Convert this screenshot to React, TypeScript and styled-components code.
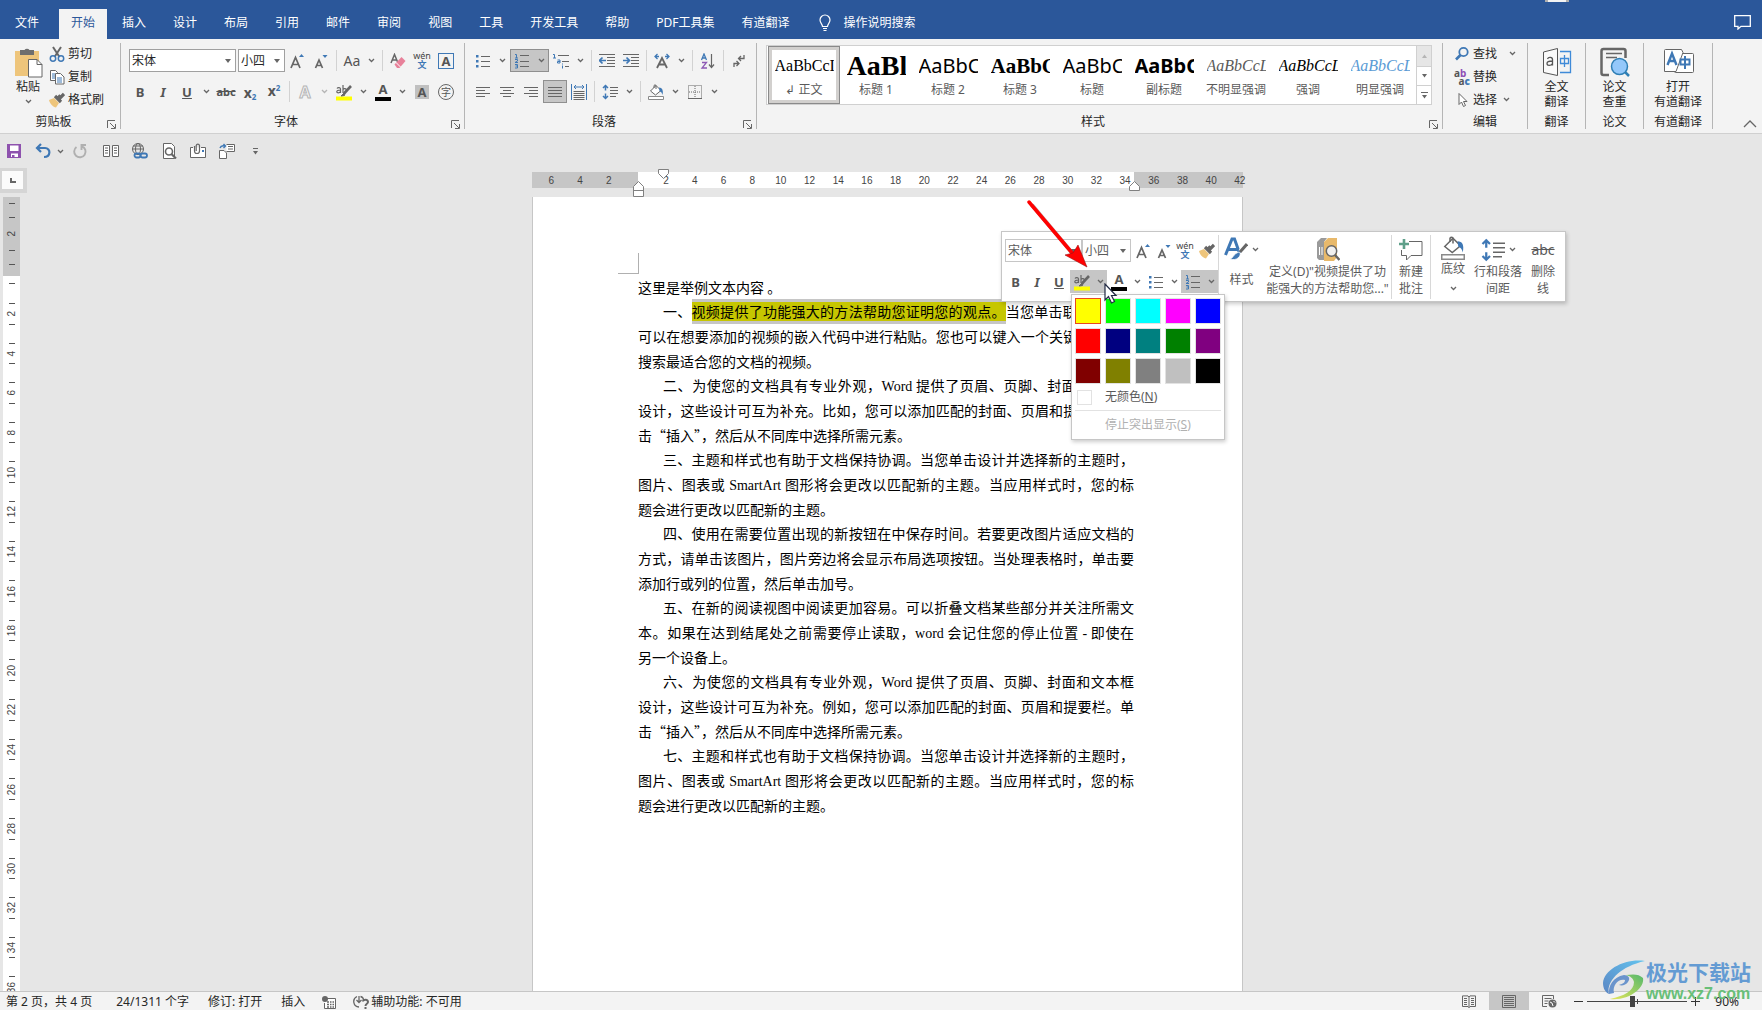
import React from "react";
import styled, { createGlobalStyle, css } from "styled-components";

const blue = "#3f78b5";
const ink = "#666666";
const uiFont = '"Noto Sans", "Noto Sans CJK SC", sans-serif';

const GlobalStyle = createGlobalStyle`
  *, *::before, *::after { box-sizing: border-box; }
  body { margin: 0; background: #e6e6e6; font-family: ${uiFont}; font-size: 12px; line-height: 16px; color: #262626; }
  button, select, input { font: inherit; color: inherit; margin: 0; }
  button { border: 0; padding: 0; background: none; white-space: nowrap; }
  svg { display: block; flex: none; }
`;

/* ---------- shell ---------- */

const Shell = styled.div`
  height: 100vh;
  display: flex;
  flex-direction: column;
  overflow: hidden;
  position: relative;
`;

const TabBar = styled.nav`
  height: 39px;
  flex: none;
  display: flex;
  align-items: flex-end;
  gap: 3px;
  padding: 0 11px 0 3px;
  background: #2b579a;
  position: relative;
`;

const Tab = styled.button<{ $active?: boolean; $lead?: boolean }>`
  height: 30px;
  padding: 0 12px 3px;
  line-height: 20px;
  color: ${(p) => (p.$active ? "#2b579a" : "#ffffff")};
  background: ${(p) => (p.$active ? "#f3f3f3" : "transparent")};
  margin-right: ${(p) => (p.$lead ? "5px" : "0")};
`;

const TellMe = styled.button`
  height: 30px;
  padding: 0 0 3px 15px;
  display: flex;
  align-items: center;
  gap: 12px;
  color: #ffffff;
`;

const CommentButton = styled.button`
  height: 30px;
  margin-left: auto;
  padding-bottom: 3px;
`;

const TopNotch = styled.span`
  position: absolute;
  top: 0;
  right: 193px;
  width: 24px;
  height: 2px;
  background: #f3f3f3;
  border: solid #b0b0b0;
  border-width: 0 3px;
`;

/* ---------- ribbon ---------- */

const Ribbon = styled.div`
  height: 95px;
  flex: none;
  display: flex;
  padding-top: 4px;
  background: #f3f3f3;
  border-bottom: 1px solid #d0d0d0;
`;

const Group = styled.section<{ $w?: number; $grow?: boolean }>`
  ${(p) => (p.$grow ? "flex: 1 1 0; min-width: 0;" : `width: ${p.$w}px; flex: none;`)}
  height: 86px;
  display: flex;
  flex-direction: column;
  border-right: 1px solid #b5b5b5;
`;

const GroupBody = styled.div<{ $left?: number; $top?: number }>`
  flex: 1;
  min-height: 0;
  display: flex;
  padding: ${(p) => p.$top ?? 0}px 0 0 ${(p) => p.$left ?? 0}px;
`;

const GroupFoot = styled.div`
  height: 14px;
  flex: none;
  display: flex;
  align-items: center;
`;

const Launcher = styled.button`
  width: 13px;
  align-self: flex-end;
`;

const FootLabel = styled.span`
  flex: 1;
  text-align: center;
  white-space: nowrap;
`;

const Rows = styled.div`
  display: flex;
  flex-direction: column;
  gap: 8px;
`;

const ToolRow = styled.div`
  height: 23px;
  display: flex;
  align-items: center;
`;

const Tool = styled.button<{ $on?: boolean; $w?: number }>`
  width: ${(p) => p.$w ?? 24}px;
  height: 23px;
  display: flex;
  align-items: center;
  justify-content: center;
  color: #555555;
  ${(p) =>
    p.$on &&
    css`
      background: #c6c6c6;
      border: 1px solid #8f8f8f;
    `}
`;

const Split = styled.button<{ $on?: boolean; $flat?: boolean; $w?: number }>`
  width: ${(p) => p.$w ?? 39}px;
  height: 23px;
  display: grid;
  grid-template-columns: 24px 1fr;
  align-items: center;
  justify-items: center;
  color: #555555;
  ${(p) =>
    p.$on &&
    css`
      background: #c6c6c6;
      box-shadow: ${p.$flat ? "none" : "inset 0 0 0 1px #8f8f8f"};
    `}
`;

const Sep = styled.span`
  width: 7px;
  height: 21px;
  flex: none;
  display: flex;
  justify-content: center;
  &::after { content: ""; width: 1px; background: #d2d2d2; }
`;

const Glyph = styled.span<{ $bold?: boolean; $italic?: boolean; $under?: boolean; $strike?: boolean; $size?: number }>`
  font-family: "Noto Sans", sans-serif;
  font-size: ${(p) => p.$size ?? 13}px;
  font-weight: ${(p) => (p.$bold ? 700 : 400)};
  font-style: ${(p) => (p.$italic ? "italic" : "normal")};
  text-decoration: ${(p) => (p.$under ? "underline" : p.$strike ? "line-through" : "none")};
  line-height: 16px;
`;

const SelectBox = styled.span<{ $w: number; $overlap?: boolean; $light?: boolean }>`
  position: relative;
  width: ${(p) => p.$w}px;
  height: 23px;
  flex: none;
  display: flex;
  border: 1px solid ${(p) => (p.$light ? "#c6c6c6" : "#a0a0a0")};
  background: #ffffff;
  margin-left: ${(p) => (p.$overlap ? "2px" : "0")};
  &::after {
    content: "";
    position: absolute;
    right: 4px;
    top: 9px;
    border: 3px solid transparent;
    border-top: 4px solid #666666;
    border-bottom: 0;
    pointer-events: none;
  }
  select {
    appearance: none;
    width: 100%;
    border: 0;
    padding: 0 12px 0 2px;
    background: transparent;
    outline: 0;
  }
`;

const PasteButton = styled.button`
  display: flex;
  flex-direction: column;
  align-items: center;
  width: 30px;
  padding-top: 4px;
`;

const PasteLabel = styled.span`
  padding: 1px 0 4px;
`;

const Stack = styled.div`
  display: flex;
  flex-direction: column;
  padding-left: 6px;
  margin-top: -1px;
`;

const StackButton = styled.button`
  height: 23px;
  display: flex;
  align-items: center;
  gap: 3px;
  text-align: left;
`;

const BigButton = styled.button`
  flex: 1;
  display: flex;
  flex-direction: column;
  align-items: center;
  line-height: 15px;
  padding-top: 3px;
`;

const BigIcon = styled.span`
  height: 31px;
  display: flex;
  align-items: center;
`;

const BigText = styled.span`
  padding-top: 2px;
  white-space: pre-line;
  text-align: center;
`;

const Collapse = styled.div`
  flex: none;
  width: 49px;
  display: flex;
  align-items: flex-end;
  justify-content: flex-end;
  padding: 0 5px 5px 0;
`;

/* ---------- style gallery ---------- */

const Gallery = styled.div`
  flex: 1;
  min-width: 0;
  height: 60px;
  display: flex;
  margin-right: 10px;
  border: 1px solid #d0d0d0;
  background: #ffffff;
`;

const GalleryItems = styled.div`
  flex: 1;
  min-width: 0;
  display: flex;
  overflow: hidden;
  padding-left: 1px;
`;

const StyleItem = styled.button<{ $on?: boolean }>`
  width: 72px;
  flex: none;
  height: 58px;
  display: flex;
  flex-direction: column;
  align-items: center;
  padding: 6px 6px 0;
  ${(p) => p.$on && "box-shadow: inset 0 0 0 1px #8a8a8a, inset 0 0 0 4px #d2d0ce;"}
`;

const Preview = styled.span<{ $serif?: boolean; $bold?: boolean; $italic?: boolean; $size: number; $color?: string }>`
  width: 59px;
  height: 29px;
  line-height: 28px;
  overflow: hidden;
  text-align: left;
  font-family: ${(p) => (p.$serif ? '"Liberation Serif", serif' : '"Noto Sans", sans-serif')};
  font-size: ${(p) => p.$size}px;
  font-weight: ${(p) => (p.$bold ? 700 : 400)};
  font-style: ${(p) => (p.$italic ? "italic" : "normal")};
  color: ${(p) => p.$color ?? "#000000"};
`;

const StyleName = styled.span`
  color: #5a5a5a;
  line-height: 18px;
`;

const GalleryScroll = styled.div`
  width: 15px;
  flex: none;
  display: grid;
  grid-template-rows: 20px 19px 19px;
  border-left: 1px solid #d0d0d0;
  button { display: flex; align-items: center; justify-content: center; }
  button + button { border-top: 1px solid #d0d0d0; }
  button:first-child { background: #e6e6e6; }
`;

/* ---------- quick access ---------- */

const QuickBar = styled.div`
  height: 34px;
  flex: none;
  display: flex;
  align-items: center;
  padding-left: 4px;
  background: #e6e6e6;
`;

const QuickButton = styled.button<{ $w?: number; $apart?: boolean }>`
  width: ${(p) => p.$w ?? 29}px;
  height: 24px;
  display: flex;
  align-items: center;
  justify-content: center;
  margin-left: ${(p) => (p.$apart ? "6px" : "0")};
`;

/* ---------- workspace ---------- */

const Workspace = styled.div`
  flex: 1;
  min-height: 0;
  display: flex;
  overflow: hidden;
`;

const SideRulerColumn = styled.div`
  width: 27px;
  flex: none;
  display: flex;
  flex-direction: column;
  gap: 4px;
`;

const TabStop = styled.button`
  height: 25px;
  background: #fbfbfb;
  border: solid #d5d5d5;
  border-width: 3px 4px 4px 2px;
  display: flex;
  align-items: center;
  justify-content: center;
`;

const SideRuler = styled.div`
  width: 17px;
  margin-left: 3px;
  flex: 1;
  overflow: hidden;
  background: #ffffff;
`;

const SideCell = styled.div`
  flex: 1;
  min-height: 0;
  display: flex;
  flex-direction: column;
  align-items: center;
  justify-content: space-between;
  padding: 9px 0;
`;

const SideMargin = styled.div`
  height: 79px;
  background: #c6c6c6;
  padding: 6px 0 11px;
  display: flex;
  flex-direction: column;
  align-items: center;
  justify-content: space-between;
`;

const SideScale = styled.div`
  height: 731px;
  padding-top: 7px;
  display: flex;
  flex-direction: column;
  align-items: center;
`;

const Tick = styled.span<{ $first?: boolean }>`
  width: 6px;
  height: 1px;
  flex: none;
  background: #555555;
  margin-bottom: ${(p) => (p.$first ? "10px" : "0")};
`;

const SideNumber = styled.span`
  writing-mode: vertical-rl;
  transform: rotate(180deg);
  font-family: "Liberation Sans", sans-serif;
  font-size: 10px;
  line-height: 12px;
  color: #444444;
`;

const Canvas = styled.main`
  flex: 1;
  min-width: 0;
  display: flex;
  flex-direction: column;
  align-items: center;
  padding: 4px 14px 0 0;
`;

const TopRuler = styled.div`
  position: relative;
  width: 711px;
  height: 16px;
  flex: none;
  margin-bottom: 9px;
  padding-left: 5px;
  display: flex;
  background: linear-gradient(to right, #c6c6c6 106px, #ffffff 106px, #ffffff 602px, #c6c6c6 602px);
`;

const TopScale = styled.div`
  flex: none;
  width: 717px;
  display: flex;
  span {
    flex: 1;
    text-align: center;
    font-family: "Liberation Sans", sans-serif;
    font-size: 10px;
    line-height: 17px;
    color: #444444;
  }
`;

const Marker = styled.svg<{ $x: number; $y: number }>`
  position: absolute;
  left: ${(p) => p.$x}px;
  top: ${(p) => p.$y}px;
`;

const Page = styled.article`
  position: relative;
  width: 711px;
  flex: 1;
  padding: 56px 108px 0 105px;
  background: #ffffff;
  border: solid #c6c6c6;
  border-width: 0 1px;
`;

const CropMark = styled.div`
  width: 21px;
  height: 21px;
  margin: 0 0 1px -20px;
  border: solid #b0b0b0;
  border-width: 0 1px 1px 0;
`;

const Para = styled.p<{ $indent?: boolean }>`
  margin: 0 0 -1px;
  font-family: "Noto Sans CJK SC", sans-serif;
  font-size: 14px;
  line-height: 25px;
  color: #000000;
  & > span:first-child { text-indent: ${(p) => (p.$indent ? "25px" : "0")}; }
`;

const Line = styled.span<{ $full?: boolean }>`
  display: block;
  height: 25px;
  text-align: justify;
  text-align-last: ${(p) => (p.$full ? "justify" : "left")};
`;

const Latin = styled.span`
  font-family: "Liberation Serif", serif;
`;

const Mark = styled.mark`
  color: inherit;
  padding: 2px 0 3px;
  background: linear-gradient(#c6c600, #c6c600) center / 100% 19px no-repeat #c6c6c6;
`;

/* ---------- floating toolbar ---------- */

const MiniBar = styled.div`
  position: absolute;
  left: 468px;
  top: 34px;
  width: 565px;
  height: 71px;
  display: flex;
  padding: 3px 0 2px 3px;
  background: #ffffff;
  border: 1px solid #c6c6c6;
  box-shadow: 1px 2px 4px rgba(0, 0, 0, 0.2);
  color: #5a5a5a;
`;

const MiniRows = styled.div`
  width: 214px;
  flex: none;
  display: flex;
  flex-direction: column;
  gap: 8px;
  padding-top: 4px;
  border-right: 1px solid #d8d8d8;
`;

const MiniRow = styled.div`
  display: flex;
  height: 23px;
  align-items: center;
`;

const MiniBig = styled.button<{ $w: number; $line?: boolean }>`
  width: ${(p) => p.$w}px;
  flex: none;
  display: flex;
  flex-direction: column;
  align-items: center;
  line-height: 17px;
  padding-top: 1px;
  border-right: ${(p) => (p.$line ? "1px solid #d8d8d8" : "0")};
`;

const MiniIcon = styled.span`
  height: 27px;
  display: flex;
  align-items: center;
  gap: 4px;
`;

const MiniText = styled.span<{ $lower?: boolean }>`
  white-space: pre;
  text-align: center;
  padding-top: ${(p) => (p.$lower ? "8px" : "0")};
`;

const ColorMenu = styled.div`
  position: absolute;
  left: 538px;
  top: 97px;
  width: 154px;
  padding: 3px 3px 0;
  background: #ffffff;
  border: 1px solid #c6c6c6;
  box-shadow: 1px 2px 4px rgba(0, 0, 0, 0.2);
  color: #5a5a5a;
`;

const Swatches = styled.div`
  display: grid;
  grid-template-columns: repeat(5, 26px);
  gap: 4px;
`;

const Swatch = styled.button<{ $c: string; $on?: boolean }>`
  height: 26px;
  background: ${(p) => p.$c};
  border: 1px solid ${(p) => (p.$on ? "#e8491d" : "#e2e2e2")};
`;

const MenuItem = styled.button<{ $off?: boolean }>`
  width: 100%;
  height: ${(p) => (p.$off ? 29 : 26)}px;
  display: grid;
  grid-template-columns: 15px auto;
  gap: 13px;
  padding-left: 2px;
  align-items: center;
  text-align: left;
  color: ${(p) => (p.$off ? "#b1b1b1" : "#5a5a5a")};
  border-top: ${(p) => (p.$off ? "1px solid #e2e2e2" : "0")};
`;

const NoColor = styled.span<{ $hidden?: boolean }>`
  height: 15px;
  border: ${(p) => (p.$hidden ? "0" : "1px solid #e2e2e2")};
`;

const Floating = styled.svg<{ $x: number; $y: number }>`
  position: absolute;
  left: ${(p) => p.$x}px;
  top: ${(p) => p.$y}px;
  pointer-events: none;
`;

/* ---------- status bar ---------- */

const StatusBar = styled.footer`
  height: 19px;
  flex: none;
  display: flex;
  align-items: center;
  padding-left: 6px;
  background: #f3f3f3;
  border-top: 1px solid #c6c6c6;
  line-height: 18px;
`;

const StatusItem = styled.button<{ $gap?: number }>`
  height: 18px;
  display: flex;
  align-items: center;
  gap: 1px;
  padding-top: 2px;
  margin-right: ${(p) => p.$gap ?? 19}px;
`;

const ViewButton = styled.button<{ $on?: boolean }>`
  width: 40px;
  height: 18px;
  display: flex;
  align-items: center;
  justify-content: center;
  background: ${(p) => (p.$on ? "#c6c6c6" : "transparent")};
`;

const StatusRight = styled.div`
  margin-left: auto;
  display: flex;
  align-items: center;
  height: 18px;
  padding-right: 23px;
`;

const ZoomButton = styled.button<{ $w: number }>`
  width: ${(p) => p.$w}px;
  height: 18px;
  display: flex;
  align-items: center;
  justify-content: center;
`;

const ZoomRange = styled.input`
  appearance: none;
  width: 100px;
  height: 12px;
  background: linear-gradient(#444444, #444444) center / 100% 1px no-repeat,
    linear-gradient(#444444, #444444) center / 1px 5px no-repeat;
  &::-webkit-slider-thumb { appearance: none; width: 5px; height: 11px; background: #444444; }
`;

const ZoomValue = styled.button`
  margin-left: 12px;
  padding-top: 2px;
`;

const Watermark = styled.div`
  position: absolute;
  right: 10px;
  bottom: 7px;
  display: flex;
  gap: 1px;
  align-items: center;
  pointer-events: none;
`;

const WatermarkText = styled.div`
  display: flex;
  flex-direction: column;
  width: 106px;
`;

const WatermarkName = styled.span`
  font-family: "Noto Sans CJK SC", sans-serif;
  font-weight: 700;
  font-size: 21px;
  line-height: 28px;
  color: #649bd3;
  white-space: nowrap;
`;

const WatermarkSite = styled.span`
  font-family: "Liberation Sans", sans-serif;
  font-weight: 700;
  font-size: 16px;
  line-height: 18px;
  color: #68bf78;
  white-space: nowrap;
`;

/* ---------- icons ---------- */

type IconProps = { w?: number; h?: number; vb?: string; children: React.ReactNode };
const Icon = ({ w = 16, h = 16, vb, children }: IconProps) => (
  <svg width={w} height={h} viewBox={vb ?? `0 0 ${w} ${h}`} fill="none" stroke={ink} strokeWidth="1" aria-hidden="true">
    {children}
  </svg>
);

const Caret = ({ c = "#666666" }: { c?: string }) => (
  <Icon w={7} h={5}><path d="M1 1l2.5 2.5L6 1" stroke={c} strokeWidth="1.3" /></Icon>
);
const Triangle = ({ c = "#666666" }: { c?: string }) => (
  <Icon w={7} h={4}><path d="M1 0h5L3.500 3.500z" fill={c} stroke="none" /></Icon>
);
const LaunchIcon = () => (
  <Icon w={9} h={9}><path d="M.5 8V.5H8M3 3l5 5M8.500 4v4.500H4" /></Icon>
);
const PasteIcon = () => (
  <Icon w={30} h={31}>
    <path d="M2 4h24v25H2z" fill="#eec57b" stroke="none" />
    <path d="M7 3h4.500a3 3 0 0 1 5 0H21v5H7z" fill="#6e6e6e" stroke="none" />
    <path d="M15.500 12.500h8.500l5 5v12.500H15.500z" fill="#fff" />
    <path d="M24 12.500v5h5" />
  </Icon>
);
const CutIcon = () => (
  <Icon>
    <path d="M4 1l6.500 10M12 1L5.500 11" strokeWidth="2" />
    <circle cx="4" cy="12.500" r="2.700" stroke={blue} strokeWidth="1.500" />
    <circle cx="12" cy="12.500" r="2.700" stroke={blue} strokeWidth="1.500" />
  </Icon>
);
const CopyIcon = () => (
  <Icon>
    <path d="M1.500 1.500h5l2 2v8h-7z" fill="#fff" /><path d="M3 5h3M3 7h3M3 9h3" stroke={blue} />
    <path d="M6.500 4.500h5l3.500 3.500v7H6.500z" fill="#fff" /><path d="M8 9h5M8 11h5M8 13h5" stroke={blue} />
  </Icon>
);
const BrushIcon = () => (
  <Icon>
    <path d="M0 8l5-2 5 5-3 4.500c-3-.5-6-3.500-7-7.500z" fill="#eec57b" stroke="none" />
    <path d="M6 4l6 6M9.500 5.500l2-2M10.500 6.500L15 2" strokeWidth="3.200" />
  </Icon>
);
const GrowIcon = ({ up }: { up?: boolean }) => (
  <Icon w={16} h={18}>
    <path d={up ? "M2 16L6.500 5.500 11 16M3.800 12.500h5.400" : "M2.500 16L6 8l3.500 8M3.800 13.500h4.400"} strokeWidth="1.700" />
    <path d={up ? "M10 5L12.500 2 15 5z" : "M9.500 3h5L12 6z"} fill={blue} stroke="none" />
  </Icon>
);
const EraserIcon = () => (
  <Icon>
    <path d="M1 10L4.500 1.500 8 10M2.300 7h4.400" strokeWidth="1.500" />
    <path d="M4.500 11.500L11.500 4l4 4L9.500 15H7z" fill="#e8819a" stroke="none" />
    <path d="M6 9.500l4.500 4.500" stroke="#fff" />
  </Icon>
);
const PinyinBox = styled.span`
  display: flex;
  flex-direction: column;
  align-items: center;
  font-size: 9px;
  line-height: 8px;
  color: #444444;
  b { font-size: 9px; line-height: 9px; color: ${blue}; font-weight: 700; }
`;
const Pinyin = () => <PinyinBox>wén<b>文</b></PinyinBox>;

const FramedA = styled.span<{ $kind: "frame" | "shade" | "ring" | "bar" | "ghost" }>`
  display: flex;
  align-items: center;
  justify-content: center;
  width: 16px;
  height: 16px;
  font-weight: 700;
  font-size: 13px;
  line-height: 14px;
  color: #555555;
  ${(p) => p.$kind === "frame" && `border: 1px solid ${blue};`}
  ${(p) => p.$kind === "shade" && "width: 14px; height: 14px; background: #c0c0c0;"}
  ${(p) => p.$kind === "ring" && "border: 1px solid #666666; border-radius: 8px; font-size: 10px; font-weight: 400;"}
  ${(p) => p.$kind === "bar" && "border-bottom: 4px solid #000000; height: 18px; line-height: 13px;"}
  ${(p) => p.$kind === "ghost" && "font-size: 16px; color: #f3f3f3; -webkit-text-stroke: 1px #b5b5b5;"}
`;

const ScriptX = styled.span<{ $low?: boolean }>`
  display: flex;
  align-items: ${(p) => (p.$low ? "flex-end" : "flex-start")};
  height: 18px;
  font-weight: 700;
  font-size: 14px;
  line-height: 16px;
  small { font-size: 8px; line-height: 9px; color: ${blue}; }
`;

const Marker16 = () => (
  <Icon w={16} h={18}>
    <path d="M0 13.500h16v4H0z" fill="#ffff00" stroke="none" />
    <path d="M1 5.500c1-1.500 3.500-1 3.500.5v4M4.500 7C2 7 .8 7.800.8 8.700c0 1.500 2.700 1.500 3.700-.2M7 2v8M7 6.500c1-1.500 3.500-1 3.500 1" strokeWidth="1.200" />
    <path d="M15 3L8 10.500" strokeWidth="2.600" />
    <path d="M9 9l-4 4 3.500-.5z" fill={ink} />
  </Icon>
);
const BulletIcon = () => (
  <Icon>
    <path d="M6 3.500h9M6 8.500h9M6 13.500h9" />
    <path d="M1 2h2.500v2.500H1zM1 7h2.500v2.500H1zM1 12h2.500v2.500H1z" fill={blue} stroke="none" />
  </Icon>
);
const NumberIcon = () => (
  <Icon>
    <path d="M6 2.500h9M6 8.500h9M6 13.500h9" />
    <path d="M1 1.500h1.500V5M1 5h3M1 6.500h2.500V8L1 9.500h3M1 11.500h2.500v3.500H1M1.500 13h2" stroke={blue} />
  </Icon>
);
const MultiIcon = () => (
  <Icon>
    <path d="M5 2.500h11M9 8.500h7M12 13.500h4" />
    <path d="M0 1.500h1.500V5M0 5h3M4.500 7H7v3H4.500V8.500H7M9.500 10.500v1M9.500 12.500v3" stroke={blue} />
  </Icon>
);
const IndentIcon = ({ right }: { right?: boolean }) => (
  <Icon>
    <path d="M0 1.500h16M8 4.500h8M8 7.500h8M8 10.500h8M0 13.500h16" />
    <path d={right ? "M0 7.500h6M3.500 4.500l3 3-3 3" : "M1 7.500h6M3.500 4.500l-3 3 3 3"} stroke={blue} strokeWidth="1.700" />
  </Icon>
);
const TextScaleIcon = () => (
  <Icon>
    <path d="M3 15l5-10 5 10M5 11.500h6" strokeWidth="1.800" />
    <path d="M5 3.500H1M3.500 1L1 3.500 3.500 6M11 3.500h4M12.500 1L15 3.500 12.500 6" stroke={blue} strokeWidth="1.300" />
  </Icon>
);
const SortIcon = () => (
  <Icon>
    <path d="M1.500 7L4 1l2.500 6M2.300 5h3.400" stroke={blue} strokeWidth="1.300" />
    <path d="M2 9.500h4.500L2 15h5" stroke="#8e5ab5" strokeWidth="1.300" />
    <path d="M11.500 1v13M9 11.500l2.500 3 2.500-3" strokeWidth="1.200" />
  </Icon>
);
const MarksIcon = () => (
  <Icon>
    <path d="M13 2v3.500H8M10 3L7.500 5.500 10 8M8 10.500H3V14M5.500 8L8 10.500 5.500 13" strokeWidth="1.300" />
  </Icon>
);
const AlignIcon = ({ kind }: { kind: "l" | "c" | "r" | "j" }) => {
  const d = {
    l: "M1 3.500h14M1 6.500h9M1 9.500h14M1 12.500h9",
    c: "M1 3.500h14M4 6.500h8M1 9.500h14M4 12.500h8",
    r: "M1 3.500h14M6 6.500h9M1 9.500h14M6 12.500h9",
    j: "M1 3.500h14M1 6.500h14M1 9.500h14M1 12.500h14",
  }[kind];
  return <Icon><path d={d} /></Icon>;
};
const DistributeIcon = () => (
  <Icon>
    <path d="M.5 0v16M15.500 0v16M3 3h10M5 1L3 3l2 2M11 1l2 2-2 2" stroke={blue} />
    <path d="M2.500 7.500h11M2.500 9.500h11M2.500 11.500h11M2.500 13.500h11M2.500 15.500h11" />
  </Icon>
);
const SpacingIcon = ({ w = 16, h = 16 }: { w?: number; h?: number }) => (
  <Icon w={w} h={h} vb="0 0 16 16">
    <path d="M3.500 1v5.500M3.500 9.500V15M1 4l2.500-2.500L6 4M1 12l2.500 2.500L6 12" stroke={blue} strokeWidth="1.500" />
    <path d="M8 3.500h8M8 6.500h8M8 9.500h8M8 12.500h6" />
  </Icon>
);
const BucketIcon = ({ w = 16, h = 16 }: { w?: number; h?: number }) => (
  <Icon w={w} h={h} vb="0 0 16 16">
    <path d="M2.500 7L8 1.500 13 6.500 7.500 11z" fill="#fff" />
    <path d="M6 4V1.500Q7 0 8 1.500V5" />
    <path d="M11 3.500q5 0 3.500 7.500Q14 8 11.500 7z" fill={blue} stroke="none" />
    <path d="M.5 12.500h15v3H.5z" fill="#fff" stroke="#8a8a8a" />
  </Icon>
);
const BorderIcon = () => (
  <Icon>
    <path d="M1.500 1.500h13v13h-13zM8 2v12M2 8h12" strokeDasharray="1 1" />
    <path d="M1 14.500h14" />
  </Icon>
);
const FindIcon = () => (
  <Icon>
    <circle cx="9.500" cy="6" r="4.200" stroke={blue} strokeWidth="1.800" />
    <path d="M6.500 9L2 13.500" stroke={blue} strokeWidth="2.600" />
  </Icon>
);
const ReplaceBox = styled.span`
  width: 16px;
  height: 16px;
  font-weight: 700;
  font-size: 10px;
  line-height: 8px;
  color: #555555;
  i { font-style: normal; color: #8e4fb5; }
  b { color: ${blue}; }
  span { display: block; text-align: right; }
`;
const ReplaceIcon = () => <ReplaceBox>a<i>b</i><span>a<b>c</b></span></ReplaceBox>;
const PointerIcon = () => (
  <Icon><path d="M5 1.500v11l2.500-2.500 2 4.500 2-1-2-4H13z" fill="#fff" /></Icon>
);
const TranslateIcon = () => (
  <Icon w={30} h={28}>
    <path d="M1.500 4L15.500.5v27L1.500 24.500z" fill="#fafafa" stroke="#555" />
    <path d="M5.500 11c1-2.500 5-2 5 .5v6M10.500 13c-4 0-5.500 1-5.500 2.500 0 2.500 4 2.500 5.500 0" stroke="#555" strokeWidth="1.300" />
    <path d="M18 3.500h10.500v21H18M18.500 10.500h8v5h-8zM22.500 7v12" stroke="#3f8ad8" strokeWidth="1.300" />
  </Icon>
);
const CheckPaperIcon = () => (
  <Icon w={30} h={30}>
    <path d="M9 28H3.500q-2 0-2-2V4q0-2 2-2h20q2 0 2 2v7" strokeWidth="2.500" />
    <path d="M6 6.500h16M6 10.500h11" strokeWidth="1.600" />
    <circle cx="19.500" cy="19.500" r="8" fill="#94c8fa" stroke="#2f7fb5" strokeWidth="1.500" />
    <path d="M25 25l4 4" stroke="#2f7fb5" strokeWidth="2.500" />
  </Icon>
);
const YoudaoIcon = () => (
  <Icon w={31} h={28}>
    <rect x="11.500" y="5.500" width="19" height="19" rx="1" fill="#fff" />
    <path d="M1.500 2.500q0-1 1-1h16l1.500 3-7 19H1.500z" fill="#fff" />
    <path d="M4.500 17L9 5.500 13.500 17M6 13h6" stroke={blue} strokeWidth="2.400" />
    <path d="M17.500 11.500h9v5h-9zM22 8v13" stroke={blue} strokeWidth="2" />
  </Icon>
);
const BulbIcon = () => (
  <Icon w={12} h={17}>
    <path d="M3.500 12.500c0-2.500-2.500-3.500-2.500-6.500a5 5 0 0 1 10 0c0 3-2.500 4-2.500 6.500zM4 14.500h4M4.500 16.500h3" stroke="#fff" strokeWidth="1.200" />
  </Icon>
);
const CommentIcon = () => (
  <Icon w={17} h={15}><path d="M.7.7h15.600v10.600H7L4 14v-2.700H.7z" stroke="#fff" strokeWidth="1.300" /></Icon>
);
const SaveIcon = () => (
  <Icon w={14} h={14}>
    <path d="M0 0h14v14H0z" fill="#8e52ae" stroke="none" />
    <path d="M3 1.500h8.500V7H3zM4 9.500h7V13H4z" fill="#fff" stroke="none" />
    <path d="M5 11h2.500v2H5z" fill="#8e52ae" stroke="none" />
  </Icon>
);
const UndoIcon = () => (
  <Icon><path d="M6 1L2 5l4 4M2.500 5H10c6 0 6 9-1 9" stroke={blue} strokeWidth="2.200" /></Icon>
);
const RedoIcon = () => (
  <Icon><path d="M10 3.300A5.700 5.700 0 1 1 4.500 4M9.500 7V2H14" stroke="#b0b0b0" strokeWidth="1.900" /></Icon>
);
const PagesIcon = () => (
  <Icon>
    <path d="M.5 2.500h6v11h-6zM9.500 2.500h6v11h-6z" fill="#fff" />
    <path d="M2 5h3M2 7.500h3M2 10h3M11 5h3M11 7.500h3M11 10h3" />
  </Icon>
);
const GlobeLinkIcon = () => (
  <Icon>
    <circle cx="6" cy="6" r="5.500" /><ellipse cx="6" cy="6" rx="2.500" ry="5.500" /><path d="M.5 6h11M1 3h10" />
    <rect x="2.500" y="10.500" width="6" height="4" rx="2" stroke={blue} strokeWidth="1.800" />
    <rect x="8.500" y="10.500" width="6.500" height="4" rx="2" stroke={blue} strokeWidth="1.800" />
  </Icon>
);
const PreviewIcon = () => (
  <Icon>
    <path d="M2.500.5h8l3 3v12h-11z" fill="#fff" />
    <circle cx="8" cy="8.500" r="3.500" fill="#fff" strokeWidth="1.600" /><path d="M10.500 11l4.500 4.500" strokeWidth="2.200" />
  </Icon>
);
const AttachIcon = () => (
  <Icon>
    <path d="M3 4.500H.5v10h15v-10H11" fill="#fff" />
    <path d="M4.500 3v5a2.300 2.300 0 0 0 5 0V2.500a1.700 1.700 0 0 0-3.300 0V8" strokeWidth="1.200" />
    <path d="M12 7h2v2h-2z" fill={blue} stroke="none" />
  </Icon>
);
const SwitchIcon = () => (
  <Icon>
    <path d="M7.500 1.500h8v7h-8M9 3.500h5M9 6h5" fill="#fff" />
    <path d="M.5 7.500H5L7.500 10v5.500h-7z" fill="#fff" />
    <path d="M1 5q1-3 5-2M4.500 1L6.500 3l-2 2" stroke={blue} strokeWidth="1.400" />
  </Icon>
);
const StylesIcon = () => (
  <Icon w={24} h={25}>
    <path d="M1.500 18L8 2h2.500l5 14M4.500 12.500h9" stroke={blue} strokeWidth="3" />
    <path d="M23 7l-6 8" stroke="#fff" strokeWidth="6" />
    <path d="M23 7l-7 8" strokeWidth="3" />
    <path d="M15 15c2 1 1.500 4-1 6-2 1.800-5 2-8 1 3-.5 3-5 9-7z" fill={blue} stroke="#fff" strokeWidth=".8" />
  </Icon>
);
const BookIcon = () => (
  <Icon w={24} h={25}>
    <path d="M1 5l4-4h6L8 5v18H3l-2-2z" fill="#9a9a9a" stroke="none" />
    <path d="M3.500 10v8M6 10v8" stroke="#fff" />
    <path d="M8 5l4-4h9v19l-3 4H8z" fill="#e8b96b" stroke="none" />
    <circle cx="15.500" cy="14" r="5.200" fill="#f0f0f0" strokeWidth="1.500" />
    <path d="M19 18l4.500 5" strokeWidth="2.500" />
  </Icon>
);
const NewCommentIcon = () => (
  <Icon w={24} h={22}>
    <path d="M10 2.500h13v14H12L7.500 21v-4.500H2.500V11" />
    <path d="M5 0v10M0 5h10" stroke="#5fa08a" strokeWidth="2.600" />
  </Icon>
);
const CalendarIcon = () => (
  <Icon w={14} h={13}>
    <path d="M3 2.500h10.500v10h-11V7" fill="#fff" />
    <circle cx="3" cy="3" r="3" fill={ink} stroke="none" />
    <path d="M5 6h2M8 6h1.500M10.500 6H12M5 8.500h2M8 8.500h1.500M10.500 8.500H12M5 11h2M8 11h1.500M10.500 11H12" strokeWidth="1.500" />
  </Icon>
);
const AccessIcon = () => (
  <Icon w={17} h={14}>
    <path d="M4 1.500A5.500 5.500 0 0 0 6 12M6 1v6M3.500 5L6 7.500 8.500 5M7.500 1.500c2 .5 3 2 3 3.500" strokeWidth="1.300" />
    <path d="M10 6.500c0-2.500 5-2.500 5 .5 0 2-2.500 1.500-2.500 4M12.500 12v2" strokeWidth="2" />
  </Icon>
);
const ReadIcon = () => (
  <Icon w={14} h={13}>
    <path d="M7 2L6 .9H.5v10.600H6L7 12.500l1-1h5.500V.9H8zM7 2v11" />
    <path d="M2 3.500h3M2 5.500h3M2 7.500h3M2 9.500h3M9 3.500h3M9 5.500h3M9 7.500h3M9 9.500h3" />
  </Icon>
);
const PrintIcon = () => (
  <Icon w={14} h={13}><path d="M.5.5h13v12H.5zM2 2.500h10M2 4.500h10M2 6.500h10M2 8.500h10M2 10.500h10" /></Icon>
);
const WebIcon = () => (
  <Icon w={15} h={13}>
    <path d="M5 11.500H.5v-11h11V4M2.500 3.500h7M2.500 6h4M2.500 8.500h3" />
    <circle cx="10.500" cy="8.500" r="4" fill={ink} stroke="none" /><path d="M8 7l2 1 1 3M11.500 6l1.500 1.500" stroke="#fff" />
  </Icon>
);

/* ---------- data ---------- */

const tabs = ["文件", "开始", "插入", "设计", "布局", "引用", "邮件", "审阅", "视图", "工具", "开发工具", "帮助", "PDF工具集", "有道翻译"];

const gallery = [
  { name: "↲ 正文", text: "AaBbCcI", serif: true, size: 16 },
  { name: "标题 1", text: "AaBl", serif: true, bold: true, size: 28 },
  { name: "标题 2", text: "AaBbC", size: 20 },
  { name: "标题 3", text: "AaBbC", serif: true, bold: true, size: 21 },
  { name: "标题", text: "AaBbC", size: 20 },
  { name: "副标题", text: "AaBbC", size: 20, bold: true },
  { name: "不明显强调", text: "AaBbCcL", serif: true, italic: true, size: 16, color: "#5a5a5a" },
  { name: "强调", text: "AaBbCcL", serif: true, italic: true, size: 16 },
  { name: "明显强调", text: "AaBbCcL", serif: true, italic: true, size: 16, color: "#5b9bd5" },
];

const swatches = [
  ["黄色", "#ffff00"], ["鲜绿", "#00ff00"], ["青绿", "#00ffff"], ["粉红", "#ff00ff"], ["蓝色", "#0000ff"],
  ["红色", "#ff0000"], ["深蓝", "#000080"], ["青色", "#008080"], ["绿色", "#008000"], ["紫罗兰", "#800080"],
  ["深红", "#800000"], ["深黄", "#808000"], ["灰色-50%", "#808080"], ["灰色-25%", "#c0c0c0"], ["黑色", "#000000"],
];

const paragraphs: React.ReactNode[][] = [
  [
    <>一、<Mark>视频提供了功能强大的方法帮助您证明您的观点。</Mark>当您单击联机视频时</>,
    "可以在想要添加的视频的嵌入代码中进行粘贴。您也可以键入一个关键字以联机",
    "搜索最适合您的文档的视频。",
  ],
  [
    <>二、为使您的文档具有专业外观，<Latin>Word</Latin> 提供了页眉、页脚、封面和文本框</>,
    "设计，这些设计可互为补充。比如，您可以添加匹配的封面、页眉和提要栏。单",
    "击“插入”，然后从不同库中选择所需元素。",
  ],
  [
    "三、主题和样式也有助于文档保持协调。当您单击设计并选择新的主题时，",
    <>图片、图表或 <Latin>SmartArt</Latin> 图形将会更改以匹配新的主题。当应用样式时，您的标</>,
    "题会进行更改以匹配新的主题。",
  ],
  [
    "四、使用在需要位置出现的新按钮在中保存时间。若要更改图片适应文档的",
    "方式，请单击该图片，图片旁边将会显示布局选项按钮。当处理表格时，单击要",
    "添加行或列的位置，然后单击加号。",
  ],
  [
    "五、在新的阅读视图中阅读更加容易。可以折叠文档某些部分并关注所需文",
    <>本。如果在达到结尾处之前需要停止读取，<Latin>word</Latin> 会记住您的停止位置 <Latin>-</Latin> 即使在</>,
    "另一个设备上。",
  ],
  [
    <>六、为使您的文档具有专业外观，<Latin>Word</Latin> 提供了页眉、页脚、封面和文本框</>,
    "设计，这些设计可互为补充。例如，您可以添加匹配的封面、页眉和提要栏。单",
    "击“插入”，然后从不同库中选择所需元素。",
  ],
  [
    "七、主题和样式也有助于文档保持协调。当您单击设计并选择新的主题时，",
    <>图片、图表或 <Latin>SmartArt</Latin> 图形将会更改以匹配新的主题。当应用样式时，您的标</>,
    "题会进行更改以匹配新的主题。",
  ],
];

const topNumbers = ["6", "4", "2", "", ...Array.from({ length: 21 }, (_, i) => String(2 + i * 2))];
const sideNumbers = Array.from({ length: 18 }, (_, i) => 2 + i * 2);

/* ---------- parts ---------- */

const Foot = ({ label, launcher }: { label: string; launcher?: boolean }) => (
  <GroupFoot>
    <FootLabel>{label}</FootLabel>
    {launcher && <Launcher aria-label={`${label}设置`}><LaunchIcon /></Launcher>}
  </GroupFoot>
);

const SplitTool = ({ label, children, on, flat, w, faded }: { label: string; children: React.ReactNode; on?: boolean; flat?: boolean; w?: number; faded?: boolean }) => (
  <Split aria-label={label} $on={on} $flat={flat} $w={w}>{children}<Caret c={faded ? "#b5b5b5" : undefined} /></Split>
);

const FontPicker = ({ w, light }: { w: number; light?: boolean }) => (
  <SelectBox $w={w} $light={light}>
    <select aria-label="字体"><option>宋体</option><option>黑体</option></select>
  </SelectBox>
);
const SizePicker = ({ w, light }: { w: number; light?: boolean }) => (
  <SelectBox $w={w} $light={light} $overlap={!light}>
    <select aria-label="字号"><option>小四</option><option>四号</option></select>
  </SelectBox>
);

const FontGroup = () => (
  <Group $w={344}>
    <GroupBody $left={8} $top={6}>
      <Rows>
        <ToolRow>
          <FontPicker w={107} />
          <SizePicker w={47} />
          <Tool aria-label="增大字号"><GrowIcon up /></Tool>
          <Tool aria-label="减小字号"><GrowIcon /></Tool>
          <Sep />
          <SplitTool label="更改大小写"><Glyph $size={14}>Aa</Glyph></SplitTool>
          <Sep />
          <Tool aria-label="清除格式"><EraserIcon /></Tool>
          <Tool aria-label="拼音指南"><Pinyin /></Tool>
          <Tool aria-label="字符边框"><FramedA $kind="frame">A</FramedA></Tool>
        </ToolRow>
        <ToolRow>
          <Tool aria-label="加粗" $w={22}><Glyph $bold>B</Glyph></Tool>
          <Tool aria-label="倾斜"><Glyph $bold $italic>I</Glyph></Tool>
          <SplitTool label="下划线"><Glyph $bold $under>U</Glyph></SplitTool>
          <Tool aria-label="删除线"><Glyph $bold $strike $size={11}>abc</Glyph></Tool>
          <Tool aria-label="下标"><ScriptX $low>x<small>2</small></ScriptX></Tool>
          <Tool aria-label="上标"><ScriptX>x<small>2</small></ScriptX></Tool>
          <Sep />
          <SplitTool label="文本效果" faded><FramedA $kind="ghost">A</FramedA></SplitTool>
          <SplitTool label="突出显示"><Marker16 /></SplitTool>
          <SplitTool label="字体颜色"><FramedA $kind="bar">A</FramedA></SplitTool>
          <Tool aria-label="字符底纹"><FramedA $kind="shade">A</FramedA></Tool>
          <Tool aria-label="带圈字符"><FramedA $kind="ring">字</FramedA></Tool>
        </ToolRow>
      </Rows>
    </GroupBody>
    <Foot label="字体" launcher />
  </Group>
);

const ParagraphGroup = () => (
  <Group $w={292}>
    <GroupBody $left={6} $top={6}>
      <Rows>
        <ToolRow>
          <SplitTool label="项目符号"><BulletIcon /></SplitTool>
          <SplitTool label="编号" on><NumberIcon /></SplitTool>
          <SplitTool label="多级列表"><MultiIcon /></SplitTool>
          <Sep />
          <Tool aria-label="减少缩进"><IndentIcon /></Tool>
          <Tool aria-label="增加缩进"><IndentIcon right /></Tool>
          <Sep />
          <SplitTool label="中文版式"><TextScaleIcon /></SplitTool>
          <Sep />
          <Tool aria-label="排序"><SortIcon /></Tool>
          <Sep />
          <Tool aria-label="显示编辑标记"><MarksIcon /></Tool>
        </ToolRow>
        <ToolRow>
          <Tool aria-label="左对齐"><AlignIcon kind="l" /></Tool>
          <Tool aria-label="居中"><AlignIcon kind="c" /></Tool>
          <Tool aria-label="右对齐"><AlignIcon kind="r" /></Tool>
          <Tool aria-label="两端对齐" $on><AlignIcon kind="j" /></Tool>
          <Tool aria-label="分散对齐"><DistributeIcon /></Tool>
          <Sep />
          <SplitTool label="行距"><SpacingIcon /></SplitTool>
          <Sep />
          <SplitTool label="底纹"><BucketIcon /></SplitTool>
          <SplitTool label="边框"><BorderIcon /></SplitTool>
        </ToolRow>
      </Rows>
    </GroupBody>
    <Foot label="段落" launcher />
  </Group>
);

const StylesGroup = () => (
  <Group $grow>
    <GroupBody $left={9} $top={2}>
      <Gallery>
        <GalleryItems>
          {gallery.map((s, i) => (
            <StyleItem key={s.name} $on={i === 0}>
              <Preview $serif={s.serif} $bold={s.bold} $italic={s.italic} $size={s.size} $color={s.color}>{s.text}</Preview>
              <StyleName>{s.name}</StyleName>
            </StyleItem>
          ))}
        </GalleryItems>
        <GalleryScroll>
          <button aria-label="上一行"><Icon w={7} h={4}><path d="M1 4h5L3.500.5z" fill="#b5b5b5" stroke="none" /></Icon></button>
          <button aria-label="下一行"><Triangle /></button>
          <button aria-label="其他样式"><Icon w={7} h={7}><path d="M0 .5h7" /><path d="M1 3h5L3.500 6.500z" fill={ink} stroke="none" /></Icon></button>
        </GalleryScroll>
      </Gallery>
    </GroupBody>
    <Foot label="样式" launcher />
  </Group>
);

const BigGroup = ({ w, icon, text, label }: { w: number; icon: React.ReactNode; text: string; label: string }) => (
  <Group $w={w}>
    <GroupBody>
      <BigButton><BigIcon>{icon}</BigIcon><BigText>{text}</BigText></BigButton>
    </GroupBody>
    <Foot label={label} />
  </Group>
);

const MiniToolbar = () => (
  <MiniBar>
    <MiniRows>
      <MiniRow>
        <FontPicker w={77} light />
        <SizePicker w={49} light />
        <Tool aria-label="增大字号" $w={23}><GrowIcon up /></Tool>
        <Tool aria-label="减小字号" $w={20}><GrowIcon /></Tool>
        <Tool aria-label="拼音指南" $w={22}><Pinyin /></Tool>
        <Tool aria-label="格式刷" $w={22}><BrushIcon /></Tool>
      </MiniRow>
      <MiniRow>
        <Tool aria-label="加粗" $w={21}><Glyph $bold>B</Glyph></Tool>
        <Tool aria-label="倾斜" $w={22}><Glyph $bold $italic>I</Glyph></Tool>
        <Tool aria-label="下划线" $w={22}><Glyph $bold $under>U</Glyph></Tool>
        <SplitTool label="突出显示" on flat w={37}><Marker16 /></SplitTool>
        <SplitTool label="字体颜色" w={37}><FramedA $kind="bar">A</FramedA></SplitTool>
        <SplitTool label="项目符号" w={37}><BulletIcon /></SplitTool>
        <SplitTool label="编号" on flat w={37}><NumberIcon /></SplitTool>
      </MiniRow>
    </MiniRows>
    <MiniBig $w={45}>
      <MiniIcon><StylesIcon /><Caret /></MiniIcon>
      <MiniText $lower>样式</MiniText>
    </MiniBig>
    <MiniBig $w={128} $line>
      <MiniIcon><BookIcon /></MiniIcon>
      <MiniText>{'定义(D)"视频提供了功\n能强大的方法帮助您..."'}</MiniText>
    </MiniBig>
    <MiniBig $w={39} $line>
      <MiniIcon><NewCommentIcon /></MiniIcon>
      <MiniText>{"新建\n批注"}</MiniText>
    </MiniBig>
    <MiniBig $w={44}>
      <MiniIcon><BucketIcon w={24} h={24} /></MiniIcon>
      <MiniText>底纹</MiniText>
      <MiniIcon><Caret /></MiniIcon>
    </MiniBig>
    <MiniBig $w={46}>
      <MiniIcon><SpacingIcon w={24} h={24} /><Caret /></MiniIcon>
      <MiniText>{"行和段落\n间距"}</MiniText>
    </MiniBig>
    <MiniBig $w={44}>
      <MiniIcon><Glyph $strike $size={14}>abc</Glyph></MiniIcon>
      <MiniText>{"删除\n线"}</MiniText>
    </MiniBig>
  </MiniBar>
);

const HighlightMenu = () => (
  <ColorMenu>
    <Swatches>
      {swatches.map(([name, c], i) => <Swatch key={name} aria-label={name} $c={c} $on={i === 0} />)}
    </Swatches>
    <MenuItem><NoColor /><span>无颜色(<u>N</u>)</span></MenuItem>
    <MenuItem $off><NoColor $hidden /><span>停止突出显示(<u>S</u>)</span></MenuItem>
  </ColorMenu>
);

export default function App() {
  return (
    <Shell>
      <GlobalStyle />
      <TabBar>
        {tabs.map((t, i) => <Tab key={t} $active={i === 1} $lead={i === 0}>{t}</Tab>)}
        <TellMe><BulbIcon />操作说明搜索</TellMe>
        <CommentButton aria-label="批注"><CommentIcon /></CommentButton>
        <TopNotch />
      </TabBar>

      <Ribbon>
        <Group $w={121}>
          <GroupBody $left={13}>
            <PasteButton><PasteIcon /><PasteLabel>粘贴</PasteLabel><Caret /></PasteButton>
            <Stack>
              <StackButton><CutIcon />剪切</StackButton>
              <StackButton><CopyIcon />复制</StackButton>
              <StackButton><BrushIcon />格式刷</StackButton>
            </Stack>
          </GroupBody>
          <Foot label="剪贴板" launcher />
        </Group>
        <FontGroup />
        <ParagraphGroup />
        <StylesGroup />
        <Group $w={85}>
          <GroupBody $left={5}>
            <Stack>
              <StackButton><FindIcon />查找<span /><span /><span /><Caret /></StackButton>
              <StackButton><ReplaceIcon />替换</StackButton>
              <StackButton><PointerIcon />选择<span /><Caret /></StackButton>
            </Stack>
          </GroupBody>
          <Foot label="编辑" />
        </Group>
        <BigGroup w={58} icon={<TranslateIcon />} text={"全文\n翻译"} label="翻译" />
        <BigGroup w={58} icon={<CheckPaperIcon />} text={"论文\n查重"} label="论文" />
        <BigGroup w={69} icon={<YoudaoIcon />} text={"打开\n有道翻译"} label="有道翻译" />
        <Collapse>
          <button aria-label="折叠功能区"><Icon w={14} h={8}><path d="M1 7l6-6 6 6" strokeWidth="1.300" /></Icon></button>
        </Collapse>
      </Ribbon>

      <QuickBar>
        <QuickButton aria-label="保存" $w={20}><SaveIcon /></QuickButton>
        <QuickButton aria-label="撤消" $w={26} $apart><UndoIcon /></QuickButton>
        <QuickButton aria-label="撤消列表" $w={8}><Caret /></QuickButton>
        <QuickButton aria-label="重做" $w={32}><RedoIcon /></QuickButton>
        <QuickButton aria-label="多页"><PagesIcon /></QuickButton>
        <QuickButton aria-label="超链接"><GlobeLinkIcon /></QuickButton>
        <QuickButton aria-label="打印预览"><PreviewIcon /></QuickButton>
        <QuickButton aria-label="电子邮件"><AttachIcon /></QuickButton>
        <QuickButton aria-label="切换窗口"><SwitchIcon /></QuickButton>
        <QuickButton aria-label="自定义快速访问工具栏">
          <Icon w={7} h={7}><path d="M1 .5h5" /><path d="M1 3h5L3.500 6.500z" fill={ink} stroke="none" /></Icon>
        </QuickButton>
      </QuickBar>

      <Workspace>
        <SideRulerColumn>
          <TabStop aria-label="制表符"><Icon w={6} h={5}><path d="M1 0v4h5" strokeWidth="2" /></Icon></TabStop>
          <SideRuler>
            <SideMargin>
              <Tick /><Tick /><SideNumber>2</SideNumber><Tick /><Tick />
            </SideMargin>
            <SideScale>
              <Tick $first />
              {sideNumbers.map((n) => (
                <SideCell key={n}><Tick /><SideNumber>{n}</SideNumber><Tick /></SideCell>
              ))}
            </SideScale>
          </SideRuler>
        </SideRulerColumn>

        <Canvas>
          <TopRuler>
            <TopScale>{topNumbers.map((n, i) => <span key={i}>{n}</span>)}</TopScale>
            <Marker $x={126} $y={-3} width="11" height="11" fill="#fff" stroke="#808080"><path d="M.5.5h10v4l-5 5-5-5z" /></Marker>
            <Marker $x={101} $y={9} width="11" height="16" fill="#fff" stroke="#808080"><path d="M.5 15.500v-10l5-5 5 5v10zM.5 9.500h10" /></Marker>
            <Marker $x={597} $y={9} width="11" height="11" fill="#fff" stroke="#808080"><path d="M.5 9.500v-4l5-5 5 5v4z" /></Marker>
          </TopRuler>

          <Page>
            <CropMark />
            <Para><Line>这里是举例文本内容 。</Line></Para>
            {paragraphs.map((lines, i) => (
              <Para key={i} $indent>
                {lines.map((l, j) => <Line key={j} $full={j < lines.length - 1}>{l}</Line>)}
              </Para>
            ))}
            <MiniToolbar />
            <HighlightMenu />
            <Floating $x={490} $y={0} width="80" height="80" viewBox="0 0 80 80">
              <path d="M9 8L50 57" stroke="#000" strokeOpacity=".3" strokeWidth="4" />
              <path d="M6 5L50 57" stroke="#f00" strokeWidth="3.500" strokeLinecap="round" />
              <path d="M64 70L42 58l8-2 5-8z" fill="#f00" stroke="#9c1010" strokeWidth=".6" />
            </Floating>
            <Floating $x={571} $y={86} width="14" height="22" viewBox="0 0 14 22">
              <path d="M1 1v16l3.500-3.500L7.500 20l3-1.500L7.500 12.500H12z" fill="#fff" stroke="#222a44" strokeWidth="1.200" />
            </Floating>
          </Page>
        </Canvas>
      </Workspace>

      <StatusBar>
        <StatusItem $gap={24}>第 2 页，共 4 页</StatusItem>
        <StatusItem>24/1311 个字</StatusItem>
        <StatusItem>修订: 打开</StatusItem>
        <StatusItem $gap={17}>插入</StatusItem>
        <StatusItem aria-label="宏录制" $gap={17}><CalendarIcon /></StatusItem>
        <StatusItem><AccessIcon />辅助功能: 不可用</StatusItem>
        <StatusRight>
          <ViewButton aria-label="阅读视图"><ReadIcon /></ViewButton>
          <ViewButton aria-label="页面视图" $on><PrintIcon /></ViewButton>
          <ViewButton aria-label="Web 版式视图"><WebIcon /></ViewButton>
          <ZoomButton aria-label="缩小" $w={18}><Icon w={9} h={9}><path d="M0 4.500h9" stroke="#333" /></Icon></ZoomButton>
          <ZoomRange type="range" aria-label="显示比例" min={10} max={190} defaultValue={90} />
          <ZoomButton aria-label="放大" $w={16}><Icon w={9} h={9}><path d="M0 4.500h9M4.500 0v9" stroke="#333" /></Icon></ZoomButton>
          <ZoomValue>90%</ZoomValue>
        </StatusRight>
      </StatusBar>

      <Watermark>
        <svg width="43" height="42" viewBox="0 0 43 42" aria-hidden="true">
          <defs>
            <linearGradient id="wmBlue" x1="0" y1="1" x2="1" y2="0"><stop offset="0" stopColor="#5b86c4" /><stop offset="1" stopColor="#63c3ee" /></linearGradient>
            <linearGradient id="wmGreen" x1="0" y1="1" x2="1" y2="0"><stop offset="0" stopColor="#e6e65a" /><stop offset="1" stopColor="#55b86c" /></linearGradient>
          </defs>
          <path d="M43 2C24-1 2 10 1 24c0 5 2 9 6 11C4 24 16 8 43 2z" fill="url(#wmBlue)" />
          <path d="M7 35c-1-8 4-17 15-19 4 0 7 3 4 7-2 3-6 4-9 3 3-1 6-2 6-5-6-2-13 5-11 13z" fill="#6a94cc" />
          <path d="M24 16c8-1 13-1 17 3 2 10-14 23-33 21 14-3 24-8 24-17-1-4-4-6-8-7z" fill="url(#wmGreen)" />
        </svg>
        <WatermarkText>
          <WatermarkName>极光下载站</WatermarkName>
          <WatermarkSite>www.xz7.com</WatermarkSite>
        </WatermarkText>
      </Watermark>
    </Shell>
  );
}
